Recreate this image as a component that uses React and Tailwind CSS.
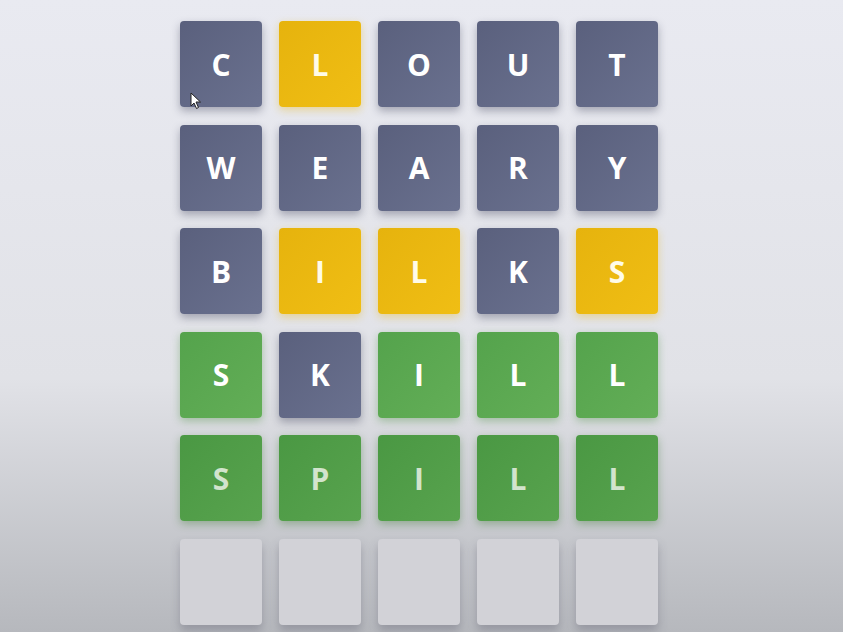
const rows = [
  [['C', 'gray'], ['L', 'yellow'], ['O', 'gray'], ['U', 'gray'], ['T', 'gray']],
  [['W', 'gray'], ['E', 'gray'], ['A', 'gray'], ['R', 'gray'], ['Y', 'gray']],
  [['B', 'gray'], ['I', 'yellow'], ['L', 'yellow'], ['K', 'gray'], ['S', 'yellow']],
  [['S', 'green'], ['K', 'gray'], ['I', 'green'], ['L', 'green'], ['L', 'green']],
  [['S', 'dark'], ['P', 'dark'], ['I', 'dark'], ['L', 'dark'], ['L', 'dark']],
  [['', 'empty'], ['', 'empty'], ['', 'empty'], ['', 'empty'], ['', 'empty']],
];

const tileStyles = {
  gray: 'bg-gradient-to-br from-[#5a607d] to-[#6a718f] text-white shadow-[0_4px_8px_rgba(40,44,70,0.35)]',
  yellow: 'bg-gradient-to-br from-[#e6b30d] to-[#f0be14] text-[#fffbe8] shadow-[0_3px_8px_rgba(230,180,20,0.4)]',
  green: 'bg-gradient-to-br from-[#54a34c] to-[#63ae57] text-white shadow-[0_3px_8px_rgba(70,140,60,0.4)]',
  dark: 'bg-gradient-to-br from-[#4a9843] to-[#58a34e] text-[#d2e4cd] shadow-[0_3px_8px_rgba(60,120,50,0.4)]',
  empty: 'bg-[#d2d2d7] shadow-[0_6px_10px_rgba(90,90,105,0.35)]',
};

function Tile({ letter, kind }) {
  return (
    <div
      className={`flex h-[86px] w-[82px] items-center justify-center rounded-[4px] text-[30px] font-bold ${tileStyles[kind]}`}
      style={{ fontFamily: '"Open Sans", "DejaVu Sans", sans-serif' }}
    >
      {letter}
    </div>
  );
}

function Cursor() {
  return (
    <svg className="absolute left-[190px] top-[92px]" width="12" height="18" viewBox="0 0 12 18">
      <path d="M1 1 L1 14 L4 11 L6.5 16.5 L8.5 15.5 L6 10 L10.5 10 Z" fill="#fff" stroke="#222" strokeWidth="1" />
    </svg>
  );
}

export default function App() {
  return (
    <div className="relative h-[632px] w-[843px] overflow-hidden bg-gradient-to-b from-[#e9eaf1] via-[#e1e2e7] via-60% to-[#b6b8bd]">
      <div className="flex flex-col gap-[17.5px] pl-[180px] pt-[21px]">
        {rows.map((row, i) => (
          <div key={i} className="flex gap-[17px]">
            {row.map(([l, k], j) => (
              <Tile key={j} letter={l} kind={k} />
            ))}
          </div>
        ))}
      </div>
      <Cursor />
    </div>
  );
}
